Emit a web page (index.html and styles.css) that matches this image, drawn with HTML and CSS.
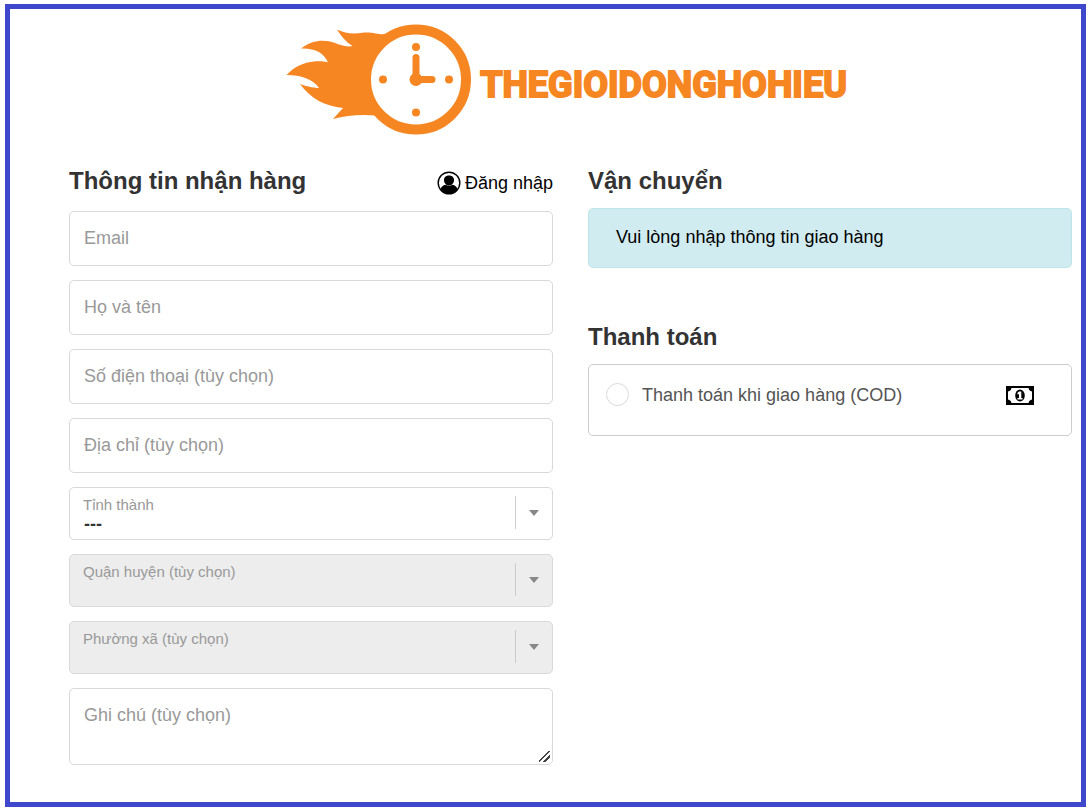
FILE: index.html
```html
<!DOCTYPE html>
<html lang="vi">
<head>
<meta charset="utf-8">
<meta name="viewport" content="width=device-width, initial-scale=1">
<title>Thanh toán đơn hàng</title>
<link rel="stylesheet" href="styles.css">
</head>
<body>
<div class="page">
  <header class="header">
    <a class="brand" href="#">
      <svg class="brand-mark" viewBox="0 0 186 112" aria-hidden="true">
        <path fill="#f68622" d="M0.5 51C8 43 18 38 28 37.500C35 37 41 38 42 38.500C38 29 29 24 15 24.500C26 16 38 15 49 19C56 22 63 23 66.500 22C60 18 55 12 51 5.500C60 10 68 10 78 8.500C88 8 94 11 98 10L125 5L150 56L120 108C105 103 98 94 93 92C78 90 62 91 47 95L57 84C39 82 25 75 14 60C22 63 30 64 33 64C27 55 15 51 0.500 51Z"/>
        <circle cx="130" cy="55.500" r="50" fill="#fff" stroke="#f68622" stroke-width="10"/>
        <g fill="#f68622"><circle cx="130" cy="23" r="4"/><circle cx="97" cy="55.500" r="4"/><circle cx="163" cy="55.500" r="4"/><circle cx="130" cy="88.500" r="4"/><circle cx="130" cy="55.500" r="6.500"/></g>
        <path fill="none" stroke="#f68622" stroke-width="7" stroke-linecap="round" d="M130 33.500V55.500H146"/>
      </svg>
      <span class="brand-name">THEGIOIDONGHOHIEU</span>
    </a>
  </header>
  <main class="columns">
    <form class="delivery">
      <div class="heading-row">
        <h2 class="heading">Thông tin nhận hàng</h2>
        <a class="login" href="#">
          <svg class="login-icon" viewBox="0 0 24 24" aria-hidden="true">
            <circle cx="12" cy="12" r="10.800" fill="#fff" stroke="#000" stroke-width="1.400"/>
            <path d="M12 4.500c3.400 0 5.300 2.200 5 5-.2 2.800-2.300 5-5 5s-4.800-2.200-5-5c-.3-2.800 1.600-5 5-5Z"/>
            <path d="M3.600 18.500c.5-2.800 2.500-4.300 5-4.700 2 1.400 4.800 1.400 6.800 0 2.500.4 4.500 1.900 5 4.700A10.500 10.500 0 0 1 3.600 18.500Z"/>
          </svg>
          Đăng nhập
        </a>
      </div>
      <div class="fields">
        <input class="field" type="email" placeholder="Email" aria-label="Email">
        <input class="field" type="text" placeholder="Họ và tên" aria-label="Họ và tên">
        <input class="field" type="tel" placeholder="Số điện thoại (tùy chọn)" aria-label="Số điện thoại (tùy chọn)">
        <input class="field" type="text" placeholder="Địa chỉ (tùy chọn)" aria-label="Địa chỉ (tùy chọn)">
        <div class="picker">
          <select class="picker-select" id="province"><option>---</option></select>
          <label class="picker-label" for="province">Tỉnh thành</label>
          <span class="picker-arrow"></span>
        </div>
        <div class="picker">
          <select class="picker-select" id="district" disabled></select>
          <label class="picker-label" for="district">Quận huyện (tùy chọn)</label>
          <span class="picker-arrow"></span>
        </div>
        <div class="picker">
          <select class="picker-select" id="ward" disabled></select>
          <label class="picker-label" for="ward">Phường xã (tùy chọn)</label>
          <span class="picker-arrow"></span>
        </div>
        <textarea class="field note" placeholder="Ghi chú (tùy chọn)" aria-label="Ghi chú (tùy chọn)"></textarea>
      </div>
    </form>
    <div class="summary">
      <section>
        <h2 class="heading">Vận chuyển</h2>
        <div class="notice">Vui lòng nhập thông tin giao hàng</div>
      </section>
      <section>
        <h2 class="heading">Thanh toán</h2>
        <div class="payment">
          <input class="payment-radio" type="radio" id="cod" name="payment">
          <label class="payment-label" for="cod">Thanh toán khi giao hàng (COD)</label>
          <svg class="payment-icon" viewBox="0 0 28 20" aria-hidden="true">
            <path d="M0 1H28V20H0Z"/>
            <path fill="#fff" d="M5.500 3H22.500Q23 6 26 6.500V14.500Q23 15 22.500 18H5.500Q5 15 2 14.500V6.500Q5 6 5.500 3Z"/>
            <ellipse cx="14" cy="10.500" rx="4.800" ry="6"/>
            <path fill="#fff" d="M13 6.500H15.300V13H16.500V14.500H11.500V13H13V9L11.500 9.500V7.700Z"/>
          </svg>
        </div>
      </section>
    </div>
  </main>
</div>
</body>
</html>
```

FILE: styles.css
```css
* {
  box-sizing: border-box;
}

body {
  margin: 0;
  padding: 4px 4px 5px 5px;
  min-height: 100vh;
  display: flex;
  background: #fff;
  color: #000;
  font: 18px/24px "Liberation Sans", Arial, sans-serif;
}

.page {
  flex: 1;
  border: 5px solid #3f48cc;
  padding: 15px 9px 36px 59px;
}

.header {
  display: flex;
  justify-content: center;
  padding-right: 8px;
  margin-bottom: 31px;
}

.brand {
  display: flex;
  align-items: center;
  gap: 8px;
  color: #f68622;
  text-decoration: none;
}

.brand-mark {
  width: 186px;
  height: 112px;
}

.brand-name {
  padding-top: 10px;
  font: bold 36px/48px Roboto, "Liberation Sans", sans-serif;
  -webkit-text-stroke: 2px #f68622;
}

.columns {
  display: grid;
  grid-template-columns: 1fr 1fr;
  gap: 35px;
}

.heading {
  margin: 0;
  color: #333;
  font-size: 24px;
  line-height: 28px;
}

.heading-row {
  display: flex;
  justify-content: space-between;
  margin-bottom: 16px;
}

.login {
  display: flex;
  align-items: center;
  gap: 4px;
  padding-top: 4px;
  color: #000;
  text-decoration: none;
}

.login-icon {
  width: 24px;
  height: 24px;
}

.fields {
  display: grid;
  gap: 14px;
}

.field {
  width: 100%;
  height: 55px;
  padding: 0 14px;
  border: 1px solid #d9d9d9;
  border-radius: 5px;
  background: #fff;
  color: #333;
  font: inherit;
}

.field::placeholder {
  color: #999;
  opacity: 1;
}

.note {
  display: block;
  height: 77px;
  padding-top: 14px;
  resize: vertical;
}

.note::-webkit-resizer {
  background: linear-gradient(135deg, transparent 44%, #444 44% 54%, transparent 54% 68%, #444 68% 78%, transparent 78%) 2px 2px / 11px 11px no-repeat;
}

.picker {
  display: grid;
  height: 53px;
}

.picker > * {
  grid-area: 1 / 1;
}

.picker-select {
  appearance: none;
  width: 100%;
  padding: 20px 50px 0 14px;
  border: 1px solid #d9d9d9;
  border-radius: 5px;
  background: #fff;
  color: #333;
  font: inherit;
  font-weight: bold;
}

.picker-select:disabled {
  background: #ededed;
  opacity: 1;
}

.picker-label {
  justify-self: start;
  align-self: start;
  padding: 8px 14px;
  color: #999;
  font-size: 15px;
  line-height: 20px;
  pointer-events: none;
}

.picker-arrow {
  display: grid;
  place-items: center;
  justify-self: end;
  align-self: start;
  width: 38px;
  height: 33px;
  margin-top: 9px;
  padding-right: 2px;
  border-left: 1px solid #ccc;
  pointer-events: none;
}

.picker-arrow::before {
  content: "";
  border: 5px solid transparent;
  border-top: 6px solid #888;
  border-bottom: 0;
}

.summary {
  display: grid;
  align-content: start;
  gap: 55px;
}

.summary .heading {
  margin-bottom: 13px;
}

.notice {
  padding: 16px 27px 18px;
  border: 1px solid #bee5eb;
  border-radius: 5px;
  background: #d1ecf1;
}

.payment {
  display: flex;
  align-items: center;
  min-height: 72px;
  padding: 17px 37px 28px 17px;
  border: 1px solid #ccc;
  border-radius: 5px;
}

.payment-radio {
  appearance: none;
  width: 23px;
  height: 23px;
  margin: 0;
  border: 1px solid #d9d9d9;
  border-radius: 50%;
  background: #fff;
}

.payment-radio:checked {
  border: 7px solid #3f48cc;
}

.payment-label {
  flex: 1;
  padding-left: 13px;
  color: #545454;
}

.payment-icon {
  width: 28px;
  height: 20px;
}
```
